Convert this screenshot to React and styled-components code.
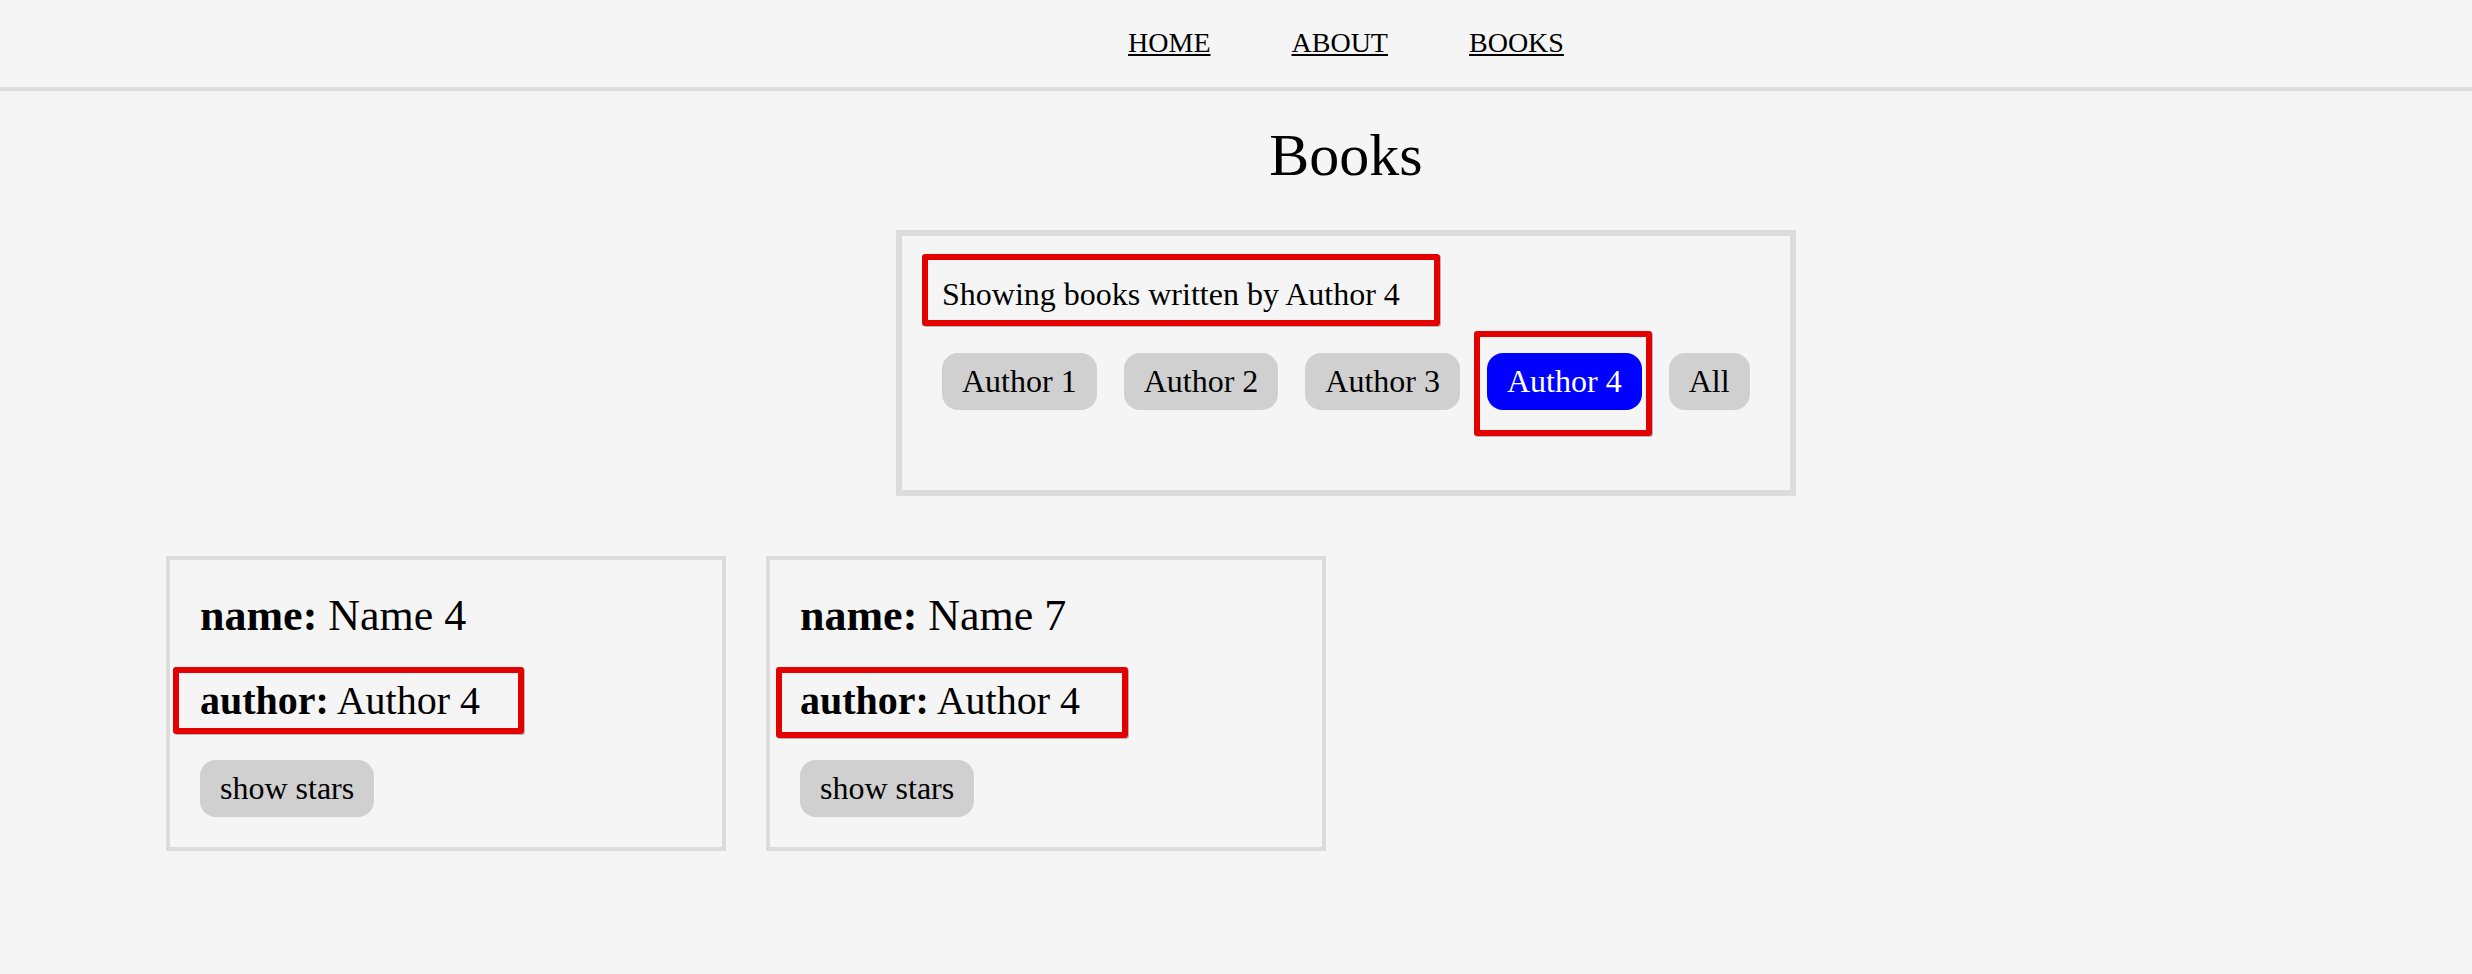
import React, { useState } from 'react';
import styled, { createGlobalStyle } from 'styled-components';

const authors = ['Author 1', 'Author 2', 'Author 3', 'Author 4'];

const books = [
    { id: 1, name: 'Name 1', author: 'Author 1' },
    { id: 2, name: 'Name 2', author: 'Author 2' },
    { id: 3, name: 'Name 3', author: 'Author 3' },
    { id: 4, name: 'Name 4', author: 'Author 4' },
    { id: 5, name: 'Name 5', author: 'Author 1' },
    { id: 6, name: 'Name 6', author: 'Author 2' },
    { id: 7, name: 'Name 7', author: 'Author 4' },
    { id: 8, name: 'Name 8', author: 'Author 3' },
];

// hand-drawn review marks, one per card
const cardMarks = ['-10px -44px -10px -27px', '-10px -48px -14px -24px'];

const App = () => {
    const [author, setAuthor] = useState('Author 4');
    const [stars, setStars] = useState({});

    const list = author === 'All' ? books : books.filter(b => b.author === author);

    return (
        <Page>
            <GlobalStyle />
            <Header>
                <NavLink href="#home">HOME</NavLink>
                <NavLink href="#about">ABOUT</NavLink>
                <NavLink href="#books">BOOKS</NavLink>
            </Header>

            <Main>
                <Title>Books</Title>
                <Panel>
                    <Status>
                        <Marked $inset="-22px -40px -13px -20px">
                            {author === 'All' ? 'Showing all books' : `Showing books written by ${author}`}
                        </Marked>
                    </Status>
                    <ButtonRow>
                        {authors.map(a => {
                            const button = (
                                <Pill key={a} $active={a === author} onClick={() => setAuthor(a)}>
                                    {a}
                                </Pill>
                            );
                            return a === author ? (
                                <Marked key={a} $inset="-22px -10px -26px -13px">{button}</Marked>
                            ) : button;
                        })}
                        <Pill $active={author === 'All'} onClick={() => setAuthor('All')}>All</Pill>
                    </ButtonRow>
                </Panel>
            </Main>

            <CardList>
                {list.map((book, i) => (
                    <Card key={book.id}>
                        <Field $size="44px"><b>name:</b> {book.name}</Field>
                        <Field $size="40px">
                            <Marked $inset={cardMarks[i % cardMarks.length]}>
                                <b>author:</b> {book.author}
                            </Marked>
                        </Field>
                        <Pill onClick={() => setStars(s => ({ ...s, [book.id]: !s[book.id] }))}>
                            {stars[book.id] ? '★★★★☆' : 'show stars'}
                        </Pill>
                    </Card>
                ))}
            </CardList>
        </Page>
    );
};

export default App;

const GlobalStyle = createGlobalStyle`
    html, body {
        margin: 0;
        background: #f5f5f5;
    }
    body {
        font-family: "Liberation Serif", "Times New Roman", serif;
        color: #000;
    }
`

const Page = styled.div`
    min-height: 974px;
    background: #f5f5f5;
`

const Header = styled.nav`
    display: flex;
    justify-content: center;
    gap: 81px;
    padding: 27px 0 28px 220px;
    border-bottom: 4px solid #dcdcdc;
`

const NavLink = styled.a`
    font-size: 28px;
    color: #000;
    text-decoration: underline;
`

const Main = styled.main`
    display: flex;
    flex-direction: column;
    align-items: center;
    padding-left: 220px;
`

const Title = styled.h1`
    margin: 30px 0 40px;
    font-size: 60px;
    font-weight: normal;
`

const Panel = styled.section`
    box-sizing: border-box;
    width: 900px;
    display: flex;
    flex-direction: column;
    align-items: flex-start;
    gap: 40px;
    padding: 40px 40px 80px;
    border: 6px solid #dcdcdc;
`

const Status = styled.p`
    margin: 0;
    font-size: 32px;
`

const ButtonRow = styled.div`
    display: flex;
    gap: 27px;
`

const Pill = styled.button`
    padding: 10px 20px;
    border: none;
    border-radius: 16px;
    font-family: inherit;
    font-size: 32px;
    line-height: normal;
    cursor: pointer;
    background: ${p => (p.$active ? '#0000ff' : '#d0d0d0')};
    color: ${p => (p.$active ? '#fff' : '#000')};
`

const Marked = styled.span`
    position: relative;
    display: inline-block;
    &::after {
        content: '';
        position: absolute;
        inset: ${p => p.$inset};
        border: 6px solid #e20000;
        border-radius: 3px;
        box-shadow: 1px 1px 0 rgba(0, 0, 0, 0.25);
        pointer-events: none;
    }
`

const CardList = styled.div`
    display: flex;
    gap: 40px;
    padding: 60px 0 0 166px;
`

const Card = styled.article`
    box-sizing: border-box;
    width: 560px;
    display: flex;
    flex-direction: column;
    align-items: flex-start;
    gap: 36px;
    padding: 30px;
    border: 4px solid #dcdcdc;
`

const Field = styled.p`
    margin: 0;
    font-size: ${p => p.$size};
`
